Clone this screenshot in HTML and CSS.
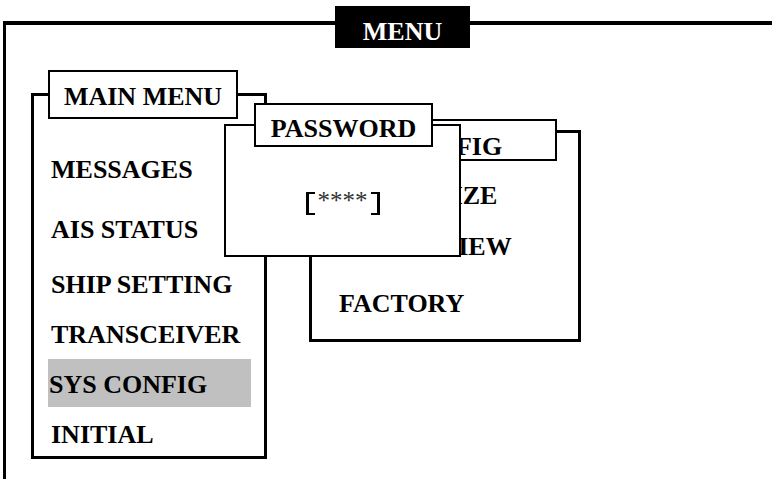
FILE: index.html
```html
<!DOCTYPE html>
<html lang="en">
<head>
  <meta charset="UTF-8">
  <title>MENU</title>
  <link rel="stylesheet" href="styles.css">
</head>
<body>

  <div class="screen">
    <div class="frame"></div>
    <div class="tab">MENU</div>

    <div class="win win-main">
      <div class="win-title title-main">MAIN MENU</div>
      <ul class="items items-main">
        <li>MESSAGES</li>
        <li>AIS STATUS</li>
        <li>SHIP SETTING</li>
        <li>TRANSCEIVER</li>
        <li class="sel">SYS CONFIG</li>
        <li>INITIAL</li>
      </ul>
    </div>

    <div class="win win-sys">
      <div class="win-title title-sys">SYS CONFIG</div>
      <ul class="items items-sys">
        <li>CUSTOMIZE</li>
        <li>LOG REVIEW</li>
        <li>FACTORY</li>
      </ul>
    </div>

    <div class="win win-pass">
      <div class="win-title title-pass">PASSWORD</div>
      <div class="pw-field">
        <span class="br br-l"></span>
        <span class="stars">****</span>
        <span class="br br-r"></span>
      </div>
    </div>
  </div>

</body>
</html>
```

FILE: styles.css
```css
body {
  margin: 0;
  background: #fff;
  color: #000;
  font-family: "Liberation Serif", "Times New Roman", serif;
  font-weight: bold;
  font-size: 26px;
}
.screen {
  position: relative;
  width: 772px;
  height: 479px;
  padding: 21px 0 0 3px;
  box-sizing: border-box;
  overflow: hidden;
}
.frame {
  height: 480px;
  border-top: 4px solid #000;
  border-left: 3px solid #000;
}
.tab {
  position: absolute;
  left: 335px;
  top: 6px;
  width: 135px;
  height: 42px;
  padding-top: 9px;
  box-sizing: border-box;
  background: #000;
  color: #fff;
  display: flex;
  align-items: center;
  justify-content: center;
}
.win {
  position: absolute;
  background: #fff;
  border: 3px solid #000;
  box-sizing: border-box;
}
.win-title {
  position: absolute;
  background: #fff;
  border: 2px solid #000;
  box-sizing: border-box;
  display: flex;
  align-items: center;
  justify-content: center;
  white-space: nowrap;
}
.items {
  list-style: none;
  margin: 0;
  padding: 0;
}
.items li {
  height: 48px;
  padding: 3px 0 0 3px;
  line-height: 45px;
  box-sizing: border-box;
  white-space: nowrap;
}

/* main menu */
.win-main {
  left: 31px;
  top: 93px;
  width: 236px;
  height: 366px;
  padding: 48px 0 0 14px;
}
.title-main {
  left: 14px;
  top: -26px;
  width: 190px;
  height: 49px;
  padding-top: 4px;
}
.items-main li {
  width: 203px;
  padding-left: 3px;
  margin-bottom: 2px;
}
.items-main li:nth-child(1) {
  margin-bottom: 12px;
}
.items-main li:nth-child(2) {
  margin-bottom: 7px;
}
.items-main .sel {
  background: #c0c0c0;
  padding-left: 1px;
}

/* sys config */
.win-sys {
  left: 309px;
  top: 130px;
  width: 272px;
  height: 212px;
  padding: 37px 0 0 24px;
}
.title-sys {
  left: 18px;
  top: -14px;
  width: 227px;
  height: 42px;
  padding: 13px 0 0 12px;
  justify-content: flex-start;
}
.items-sys li:nth-child(1) {
  margin-bottom: 3px;
}
.items-sys li:nth-child(2) {
  margin-bottom: 9px;
}

/* password */
.win-pass {
  left: 224px;
  top: 124px;
  width: 237px;
  height: 133px;
  border-width: 2px;
  padding-top: 66px;
  display: flex;
  justify-content: center;
  align-items: flex-start;
}
.title-pass {
  left: 28px;
  top: -23px;
  width: 179px;
  height: 44px;
  padding-top: 8px;
}
.pw-field {
  display: flex;
  align-items: flex-start;
  gap: 3px;
}
.br {
  width: 6px;
  height: 19px;
  border-top: 2px solid #000;
  border-bottom: 2px solid #000;
}
.br-l {
  border-left: 3px solid #000;
}
.br-r {
  border-right: 3px solid #000;
}
.stars {
  font-size: 25px;
  font-weight: normal;
  line-height: 25px;
  margin-top: -4px;
  color: #333;
}
```
